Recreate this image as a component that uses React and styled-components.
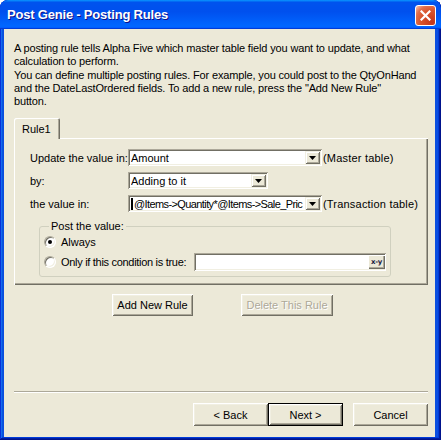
import React from 'react';
import styled, { createGlobalStyle } from 'styled-components';

const GlobalStyle = createGlobalStyle`
  html, body {
    margin: 0;
    padding: 0;
    background: #ffffff;
  }
  body {
    font-family: 'Liberation Sans', Arial, sans-serif;
    font-size: 11px;
    color: #000;
  }
`;

const Window = styled.div`
  width: 441px;
  height: 440px;
  box-sizing: border-box;
  display: flex;
  flex-direction: column;
  background: #0a4ee0;
  border-radius: 8px 8px 0 0;
  overflow: hidden;
  box-shadow: inset -1px -1px #00138c, inset 1px 1px #0831d9,
    inset -2px -2px #001ea0, inset 2px 2px #166aee, inset -3px -3px #003bda,
    inset 3px 3px #0855dd;
`;

const TitleBar = styled.div`
  height: 29px;
  flex: none;
  display: flex;
  align-items: center;
  justify-content: space-between;
  padding: 0 5px 0 7px;
  box-sizing: border-box;
  border-radius: 8px 8px 0 0;
  background: linear-gradient(
    180deg,
    #0997ff,
    #0053ee 8%,
    #0050ee 40%,
    #0066ff 88%,
    #0066ff 93%,
    #005bff 95%,
    #003dd7 96%,
    #003dd7
  );
`;

const Title = styled.span`
  font-family: 'Liberation Sans', Arial, sans-serif;
  font-weight: bold;
  font-size: 13px;
  color: #fff;
  text-shadow: 1px 1px #0f1089;
  letter-spacing: -0.2px;
`;

const CloseButton = styled.div`
  width: 21px;
  height: 21px;
  box-sizing: border-box;
  margin-top: 2px;
  border: 1px solid #fff;
  border-radius: 3px;
  display: flex;
  align-items: center;
  justify-content: center;
  background: radial-gradient(
    circle at 85% 85%,
    #c4361a 0%,
    #d8542c 50%,
    #e2704c 75%,
    #f4b59f 95%,
    #ffffff 100%
  );
`;

const Client = styled.div`
  flex: 1;
  margin: 0 6px 3px 4px;
  background: #ece9d8;
  display: flex;
  flex-direction: column;
  padding: 13px 7px 11px 10px;
  min-height: 0;
`;

const Intro = styled.p`
  margin: 0 0 1px;
  line-height: 13px;
  white-space: nowrap;
  letter-spacing: -0.15px;
`;

const TabStrip = styled.div`
  display: flex;
  margin-top: 9px;
  position: relative;
  z-index: 1;
`;

const Tab = styled.div`
  height: 21px;
  padding: 0 9px 0 8px;
  display: flex;
  align-items: center;
  background: #ece9d8;
  border-radius: 2px 2px 0 0;
  box-shadow: inset 1px 1px #ffffff, inset -1px 0 #716f64,
    inset -2px 0 #aca899;
  margin-bottom: -1px;
`;

const Panel = styled.div`
  height: 147px;
  box-sizing: border-box;
  padding: 11px 16px 0 16px;
  box-shadow: inset 1px 1px #ffffff, inset -1px -1px #716f64,
    inset -2px -2px #aca899;
  display: flex;
  flex-direction: column;
`;

const Fields = styled.div`
  display: grid;
  grid-template-columns: 98px auto 1fr;
  grid-auto-rows: 17px;
  row-gap: 6px;
  align-items: center;
`;

const Label = styled.span`
  white-space: nowrap;
`;

const Note = styled.span`
  white-space: nowrap;
  padding-left: 1px;
  letter-spacing: 0.2px;
`;

const Combo = styled.div`
  width: ${(p) => p.$width}px;
  height: 17px;
  box-sizing: border-box;
  background: #fff;
  display: flex;
  align-items: center;
  padding: 2px 2px 2px 3px;
  box-shadow: inset 1px 1px #aca899, inset -1px -1px #ffffff,
    inset 2px 2px #716f64, inset -2px -2px #f1efe2;
`;

const ComboText = styled.span`
  flex: 1;
  min-width: 0;
  overflow: hidden;
  white-space: nowrap;
  display: flex;
  align-items: center;
  letter-spacing: ${(p) => p.$spacing || 0}px;
`;

const Caret = styled.span`
  width: 2px;
  height: 12px;
  background: #000;
  margin-right: 1px;
  flex: none;
`;

const ArrowButton = styled.div`
  width: 15px;
  height: 13px;
  flex: none;
  background: #ece9d8;
  display: flex;
  align-items: center;
  justify-content: center;
  box-shadow: inset 1px 1px #f1efe2, inset -1px -1px #716f64,
    inset 2px 2px #ffffff, inset -2px -2px #aca899;
`;

const Group = styled.fieldset`
  margin: 8px 21px 0 9px;
  padding: 2px 4px 5px 4px;
  min-width: 0;
  border: 1px solid #d0d0bf;
  border-radius: 3px;
  display: flex;
  flex-direction: column;
  gap: 4px;
`;

const Legend = styled.legend`
  padding: 0 2px;
  margin-left: 5px;
  line-height: 13px;
`;

const OptionRow = styled.div`
  display: flex;
  align-items: center;
  height: ${(p) => p.$height}px;
  white-space: nowrap;
`;

const OptionText = styled.span`
  letter-spacing: ${(p) => p.$spacing || 0}px;
`;

const Radio = styled.span`
  width: 12px;
  height: 12px;
  box-sizing: border-box;
  border-radius: 50%;
  background: #fff;
  border: 1px solid;
  border-color: #aca899 #ffffff #ffffff #aca899;
  box-shadow: inset 1px 1px #716f64, inset -1px -1px #f1efe2;
  display: flex;
  align-items: center;
  justify-content: center;
  margin-right: 5px;
  flex: none;

  &::after {
    content: '';
    width: 4px;
    height: 4px;
    border-radius: 50%;
    background: ${(p) => (p.$checked ? '#000' : 'transparent')};
  }
`;

const ConditionInput = styled.div`
  flex: 1;
  min-width: 0;
  height: 18px;
  box-sizing: border-box;
  margin-left: 8px;
  background: #fff;
  display: flex;
  justify-content: flex-end;
  align-items: center;
  padding: 2px 1px 2px 2px;
  box-shadow: inset 1px 1px #aca899, inset -1px -1px #ffffff,
    inset 2px 2px #716f64, inset -2px -2px #f1efe2;
`;

const ExprButton = styled.div`
  width: 17px;
  height: 14px;
  box-sizing: border-box;
  background: #ece9d8;
  color: #1a1a40;
  font-family: 'DejaVu Sans', 'Liberation Sans', sans-serif;
  font-size: 7px;
  font-weight: bold;
  letter-spacing: -0.3px;
  display: flex;
  align-items: center;
  justify-content: center;
  box-shadow: inset 1px 1px #ffffff, inset -1px -1px #716f64,
    inset -2px -2px #aca899;
`;

const RuleButtons = styled.div`
  display: flex;
  justify-content: center;
  gap: 48px;
  margin-top: 9px;
  padding-left: 3px;
`;

const Button = styled.div`
  width: ${(p) => p.$width}px;
  height: ${(p) => p.$height || 22}px;
  box-sizing: border-box;
  display: flex;
  align-items: center;
  justify-content: center;
  background: #ece9d8;
  white-space: nowrap;
  color: ${(p) => (p.$disabled ? '#aca899' : '#000')};
  text-shadow: ${(p) => (p.$disabled ? '1px 1px #ffffff' : 'none')};
  border: ${(p) => (p.$default ? '1px solid #000' : 'none')};
  box-shadow: inset 1px 1px #ffffff, inset -1px -1px #716f64,
    inset 2px 2px #f1efe2, inset -2px -2px #aca899;
`;

const Separator = styled.div`
  margin-top: auto;
  height: 0;
  border-top: 1px solid #aca899;
  border-bottom: 1px solid #ffffff;
`;

const NavButtons = styled.div`
  display: flex;
  justify-content: flex-end;
  margin-top: 10px;
`;

const Gap = styled.div`
  width: 10px;
`;

function DownArrow() {
  return (
    <svg width="7" height="4" viewBox="0 0 7 4">
      <path d="M0 0h7L3.5 4z" fill="#000" />
    </svg>
  );
}

function CloseIcon() {
  return (
    <svg width="11" height="11" viewBox="0 0 11 11">
      <path
        d="M1.5 1.5l8 8M9.5 1.5l-8 8"
        stroke="#fff"
        strokeWidth="2.2"
        strokeLinecap="square"
      />
    </svg>
  );
}

function ComboBox({ width, value, caret, spacing }) {
  return (
    <Combo $width={width}>
      <ComboText $spacing={spacing}>
        {caret && <Caret />}
        {value}
      </ComboText>
      <ArrowButton>
        <DownArrow />
      </ArrowButton>
    </Combo>
  );
}

export default function App() {
  return (
    <>
      <GlobalStyle />
      <Window>
        <TitleBar>
          <Title>Post Genie - Posting Rules</Title>
          <CloseButton>
            <CloseIcon />
          </CloseButton>
        </TitleBar>
        <Client>
          <Intro>
            A posting rule tells Alpha Five which master table field you want
            to update, and what
            <br />
            calculation to perform.
          </Intro>
          <Intro>
            You can define multiple posting rules. For example, you could post
            to the QtyOnHand
            <br />
            and the DateLastOrdered fields. To add a new rule, press the "Add
            New Rule"
            <br />
            button.
          </Intro>

          <TabStrip>
            <Tab>Rule1</Tab>
          </TabStrip>
          <Panel>
            <Fields>
              <Label>Update the value in:</Label>
              <ComboBox width={194} value="Amount" />
              <Note>(Master table)</Note>

              <Label>by:</Label>
              <ComboBox width={140} value="Adding to it" />
              <span />

              <Label>the value in:</Label>
              <ComboBox
                width={194}
                value="@Items->Quantity*@Items->Sale_Pric"
                spacing={-0.6}
                caret
              />
              <Note>(Transaction table)</Note>
            </Fields>

            <Group>
              <Legend>Post the value:</Legend>
              <OptionRow $height={14}>
                <Radio $checked />
                <OptionText>Always</OptionText>
              </OptionRow>
              <OptionRow $height={18}>
                <Radio />
                <OptionText $spacing={-0.3}>
                  Only if this condition is true:
                </OptionText>
                <ConditionInput>
                  <ExprButton>x-y</ExprButton>
                </ConditionInput>
              </OptionRow>
            </Group>
          </Panel>

          <RuleButtons>
            <Button $width={81}>Add New Rule</Button>
            <Button $width={92} $disabled>
              Delete This Rule
            </Button>
          </RuleButtons>

          <Separator />
          <NavButtons>
            <Button $width={75} $height={23}>
              &lt; Back
            </Button>
            <Button $width={75} $height={23} $default>
              Next &gt;
            </Button>
            <Gap />
            <Button $width={75} $height={23}>
              Cancel
            </Button>
          </NavButtons>
        </Client>
      </Window>
    </>
  );
}
